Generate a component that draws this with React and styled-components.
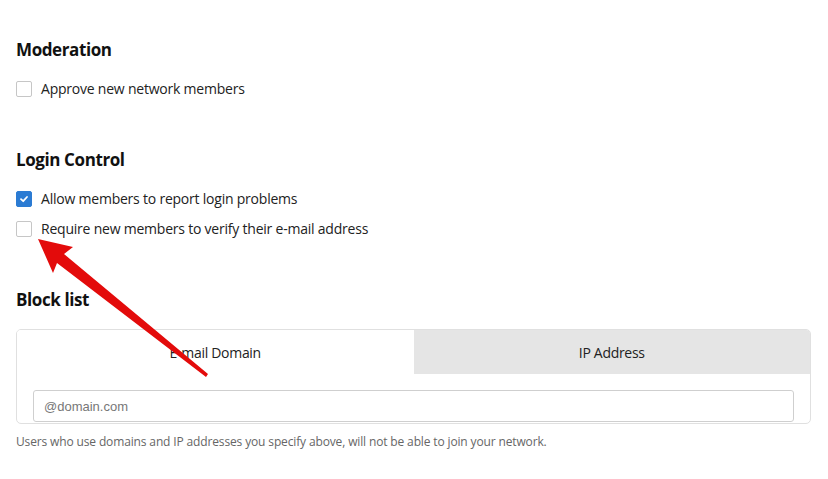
import styled, { createGlobalStyle } from "styled-components";

const GlobalStyle = createGlobalStyle`
  body {
    margin: 0;
    background: #fff;
    font-family: "Open Sans", "Noto Sans", sans-serif;
    color: #222;
  }
`;

function Checkbox({ checked }) {
  return (
    <Box checked={checked}>
      {checked && (
        <svg width="10" height="10" viewBox="0 0 10 10">
          <path d="M2 5.2 L4.2 7.2 L8 3" fill="none" stroke="#fff" strokeWidth="1.8" strokeLinecap="round" strokeLinejoin="round" />
        </svg>
      )}
    </Box>
  );
}

function App() {
  return (
    <Page>
      <GlobalStyle />
      <Section>
        <Heading>Moderation</Heading>
        <Options>
          <Option>
            <Checkbox />
            Approve new network members
          </Option>
        </Options>
      </Section>

      <Section>
        <Heading>Login Control</Heading>
        <Options>
          <Option>
            <Checkbox checked />
            Allow members to report login problems
          </Option>
          <Option>
            <Checkbox />
            Require new members to verify their e-mail address
          </Option>
        </Options>
      </Section>

      <Section>
        <Heading>Block list</Heading>
        <Card>
          <Tabs>
            <Tab active>E-mail Domain</Tab>
            <Tab>IP Address</Tab>
          </Tabs>
          <CardBody>
            <Input placeholder="@domain.com" />
          </CardBody>
        </Card>
        <Hint>
          Users who use domains and IP addresses you specify above, will not be able to join your network.
        </Hint>
      </Section>

      <Arrow width="828" height="479" viewBox="0 0 828 479">
        <path
          d="M38 239 L73 247 L64 254 L208 374 L206 377 L57 263 L53 273 Z"
          fill="#e30b0b"
        />
      </Arrow>
    </Page>
  );
}

const Page = styled.div`
  position: relative;
  padding: 38px 17px 30px 16px;
  display: flex;
  flex-direction: column;
  gap: 49px;
`;

const Section = styled.section`
  display: flex;
  flex-direction: column;
`;

const Heading = styled.h2`
  margin: 0 0 17px;
  font-size: 17px;
  line-height: 24px;
  font-weight: 700;
  letter-spacing: -0.4px;
  color: #111;
`;

const Options = styled.div`
  display: flex;
  flex-direction: column;
  gap: 10px;
`;

const Option = styled.label`
  display: flex;
  align-items: center;
  gap: 9px;
  font-size: 14px;
  line-height: 20px;
  letter-spacing: -0.22px;
  color: #222;
`;

const Box = styled.span`
  width: 16px;
  height: 16px;
  box-sizing: border-box;
  border-radius: 2px;
  border: 1px solid ${(p) => (p.checked ? "#2b7bd3" : "#c6c6c6")};
  background: ${(p) => (p.checked ? "#2b7bd3" : "#fff")};
  display: flex;
  align-items: center;
  justify-content: center;
`;

const Card = styled.div`
  border: 1px solid #e0e0e0;
  border-radius: 5px;
  overflow: hidden;
`;

const Tabs = styled.div`
  display: grid;
  grid-template-columns: 1fr 1fr;
`;

const Tab = styled.div`
  height: 44px;
  display: flex;
  align-items: center;
  justify-content: center;
  font-size: 14px;
  letter-spacing: -0.3px;
  color: #222;
  background: ${(p) => (p.active ? "#fff" : "#e5e5e5")};
`;

const CardBody = styled.div`
  padding: 16px 16px 1px;
`;

const Input = styled.input`
  display: block;
  width: 100%;
  box-sizing: border-box;
  height: 32px;
  border: 1px solid #cfcfcf;
  border-radius: 3px;
  padding: 0 10px;
  font-family: "Liberation Sans", Arial, sans-serif;
  font-size: 13px;
  &::placeholder {
    color: #777;
  }
`;

const Hint = styled.p`
  margin: 10px 0 0;
  font-size: 12px;
  line-height: 16px;
  letter-spacing: -0.14px;
  color: #666;
`;

const Arrow = styled.svg`
  position: absolute;
  left: 0;
  top: 0;
  pointer-events: none;
`;

export default App;
